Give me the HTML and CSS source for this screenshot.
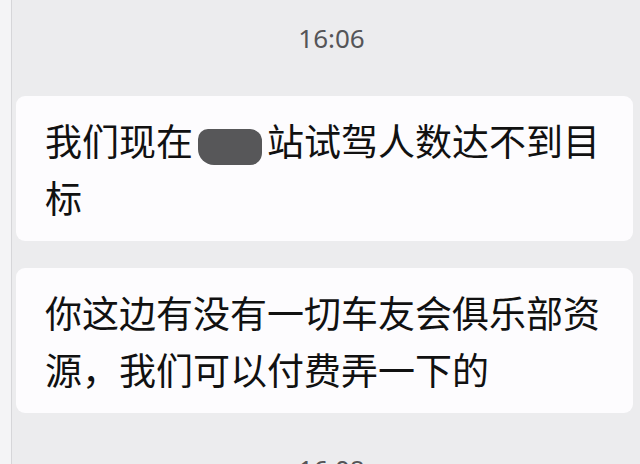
FILE: index.html
```html
<!DOCTYPE html>
<html lang="zh-CN">
<head>
<meta charset="utf-8">
<link rel="stylesheet" href="styles.css">
</head>
<body>
<div class="screen">
  <div class="edge"></div>
  <div class="chat">
    <div class="time">16:06</div>
    <div class="bubble">我们现在<span class="blur">某某</span>站试驾人数达不到目标</div>
    <div class="bubble">你这边有没有一切车友会俱乐部资源，我们可以付费弄一下的</div>
    <div class="time time-next">16:08</div>
  </div>
</div>
</body>
</html>
```
FILE: styles.css
```css
html, body {
  margin: 0;
  padding: 0;
  width: 640px;
  height: 464px;
  overflow: hidden;
  background: #ececee;
}
.screen {
  display: flex;
  height: 464px;
  overflow: hidden;
}
.edge {
  width: 11px;
  flex: none;
  background: #f4f4f6;
  border-right: 1px solid #d6d6d9;
}
.chat {
  flex: 1;
  padding: 0 7px 0 4px;
  display: flex;
  flex-direction: column;
}
.time {
  font-family: "Noto Sans", "Noto Sans CJK SC", sans-serif;
  font-size: 26px;
  color: #555558;
  text-align: center;
  padding-left: 14px;
  margin-top: 21px;
  height: 34px;
  line-height: 34px;
  margin-bottom: 41px;
  flex: none;
}
.bubble {
  background: #fdfcfe;
  border-radius: 9px;
  padding: 16px 20px 15px 29px;
  font-family: "Noto Sans CJK SC", sans-serif;
  font-size: 37px;
  line-height: 57px;
  color: #111;
  margin-bottom: 27px;
  flex: none;
}
.bubble + .time { margin-top: 12px; }
.blur {
  display: inline-block;
  color: #575759;
  background: #575759;
  border-radius: 10px 12px 12px 16px;
  line-height: 36px;
  width: 64px;
  text-align: center;
  margin-left: 5px;
  margin-right: 5px;
  vertical-align: -3px;
  font-size: 28px;
}
```
